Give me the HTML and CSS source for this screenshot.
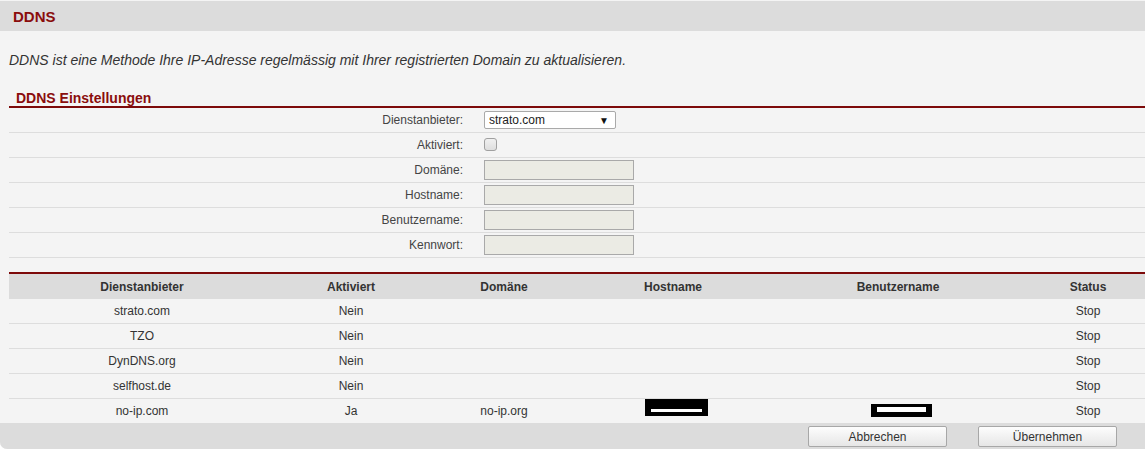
FILE: index.html
```html
<!DOCTYPE html>
<html lang="de">
<head>
<meta charset="utf-8">
<title>DDNS</title>
<link rel="stylesheet" href="styles.css">
</head>
<body>
<div class="page">
  <div class="titlebar"><h1 class="title">DDNS</h1></div>
  <p class="desc">DDNS ist eine Methode Ihre IP-Adresse regelmässig mit Ihrer registrierten Domain zu aktualisieren.</p>
  <h2 class="section">DDNS Einstellungen</h2>
  <div class="form">
    <div class="row"><label class="lbl">Dienstanbieter:</label><div class="ctl"><div class="select"><span>strato.com</span><span class="arrow">▼</span></div></div></div>
    <div class="row"><label class="lbl">Aktiviert:</label><div class="ctl"><span class="check"></span></div></div>
    <div class="row"><label class="lbl">Domäne:</label><div class="ctl"><input class="field" type="text" disabled></div></div>
    <div class="row"><label class="lbl">Hostname:</label><div class="ctl"><input class="field" type="text" disabled></div></div>
    <div class="row"><label class="lbl">Benutzername:</label><div class="ctl"><input class="field" type="text" disabled></div></div>
    <div class="row"><label class="lbl">Kennwort:</label><div class="ctl"><input class="field" type="password" disabled></div></div>
  </div>
  <table class="list">
    <colgroup>
      <col class="c1"><col class="c2"><col class="c3"><col class="c4"><col class="c5"><col class="c6">
    </colgroup>
    <thead>
      <tr><th>Dienstanbieter</th><th>Aktiviert</th><th>Domäne</th><th>Hostname</th><th>Benutzername</th><th>Status</th></tr>
    </thead>
    <tbody>
      <tr><td>strato.com</td><td>Nein</td><td></td><td></td><td></td><td>Stop</td></tr>
      <tr><td>TZO</td><td>Nein</td><td></td><td></td><td></td><td>Stop</td></tr>
      <tr><td>DynDNS.org</td><td>Nein</td><td></td><td></td><td></td><td>Stop</td></tr>
      <tr><td>selfhost.de</td><td>Nein</td><td></td><td></td><td></td><td>Stop</td></tr>
      <tr class="last"><td>no-ip.com</td><td>Ja</td><td>no-ip.org</td><td><span class="redact redact-host"></span></td><td><span class="redact redact-user"></span></td><td>Stop</td></tr>
    </tbody>
  </table>
  <div class="footer">
    <button class="btn" type="button">Abbrechen</button>
    <button class="btn" type="button">Übernehmen</button>
  </div>
</div>
</body>
</html>
```
FILE: styles.css
```css
html, body {
  margin: 0;
  padding: 0;
  background: #ffffff;
}
body {
  font-family: "Liberation Sans", Arial, sans-serif;
  color: #333333;
  font-size: 12px;
}
.page {
  width: 1145px;
  background: #f4f4f4;
  border-bottom-left-radius: 7px;
  overflow: hidden;
}
.titlebar {
  margin-top: 1px;
  height: 30px;
  background: #dcdcdc;
  display: flex;
  align-items: center;
  padding-left: 13px;
}
.title {
  margin: 0;
  font-size: 15px;
  font-weight: bold;
  color: #8a0d0d;
  line-height: 18px;
  padding-top: 2px;
}
.desc {
  margin: 21px 0 0 9px;
  font-size: 14px;
  line-height: 16px;
  font-style: italic;
  color: #333333;
}
.section {
  margin: 22px 0 0 9px;
  padding-left: 7px;
  font-size: 14px;
  line-height: 16px;
  font-weight: bold;
  color: #8a0d0d;
  border-bottom: 2px solid #7d0a0a;
}
.form {
  margin-left: 9px;
}
.row {
  display: grid;
  grid-template-columns: 454px 1fr;
  column-gap: 21px;
  align-items: center;
  height: 24px;
  border-bottom: 1px solid #dddddd;
}
.lbl {
  text-align: right;
  font-size: 12px;
  color: #444444;
}
.ctl {
  display: flex;
  align-items: center;
}
.select {
  box-sizing: border-box;
  width: 132px;
  height: 18px;
  background: #ffffff;
  border: 1px solid #a9a9a9;
  border-radius: 2px;
  display: flex;
  align-items: center;
  justify-content: space-between;
  padding: 0 6px 0 4px;
  font-size: 12px;
  color: #222222;
}
.arrow {
  font-size: 10px;
  color: #111111;
}
.check {
  box-sizing: border-box;
  width: 13px;
  height: 13px;
  border: 1px solid #a0a0a0;
  border-radius: 3px;
  background: linear-gradient(#f0f0f0, #dedede);
  margin-top: -1px;
}
.field {
  box-sizing: border-box;
  width: 150px;
  height: 20px;
  margin: 0;
  padding: 0 3px;
  background: #ebebe4;
  border: 1px solid #a9a9a9;
  border-radius: 0;
  font-family: "Liberation Sans", Arial, sans-serif;
  font-size: 12px;
}
.list {
  margin: 14px 0 0 9px;
  width: 1136px;
  border-collapse: collapse;
  table-layout: fixed;
  border-top: 2px solid #7d0a0a;
}
.c1 { width: 266px; }
.c2 { width: 152px; }
.c3 { width: 154px; }
.c4 { width: 184px; }
.c5 { width: 266px; }
.c6 { width: 114px; }
.list th {
  height: 25px;
  padding: 0;
  background: #dcdcdc;
  font-size: 12px;
  font-weight: bold;
  color: #333333;
  text-align: center;
  vertical-align: middle;
}
.list td {
  height: 24px;
  padding: 0;
  text-align: center;
  vertical-align: middle;
  font-size: 12px;
  color: #333333;
  border-bottom: 1px solid #dddddd;
}
.list tr.last td {
  border-bottom: none;
}
.redact {
  display: inline-block;
  background: #ffffff;
  border: solid #000000;
  vertical-align: middle;
  margin-left: 6px;
}
.redact-host {
  width: 51px;
  height: 3px;
  border-width: 10px 6px 4px 6px;
  margin-bottom: 7px;
}
.redact-user {
  width: 49px;
  height: 5px;
  border-width: 3px 6px 5px 6px;
  margin-bottom: 1px;
}
.footer {
  height: 26px;
  background: #dcdcdc;
  display: flex;
  justify-content: flex-end;
  align-items: flex-start;
  gap: 31px;
  padding-right: 28px;
  padding-top: 3px;
  box-sizing: border-box;
}
.btn {
  box-sizing: border-box;
  width: 139px;
  height: 21px;
  margin: 0;
  padding: 0;
  border: 1px solid #a7a7a7;
  border-radius: 2px;
  background: linear-gradient(#fdfdfd, #e6e6e6);
  font-family: "Liberation Sans", Arial, sans-serif;
  font-size: 12px;
  color: #333333;
}
```
